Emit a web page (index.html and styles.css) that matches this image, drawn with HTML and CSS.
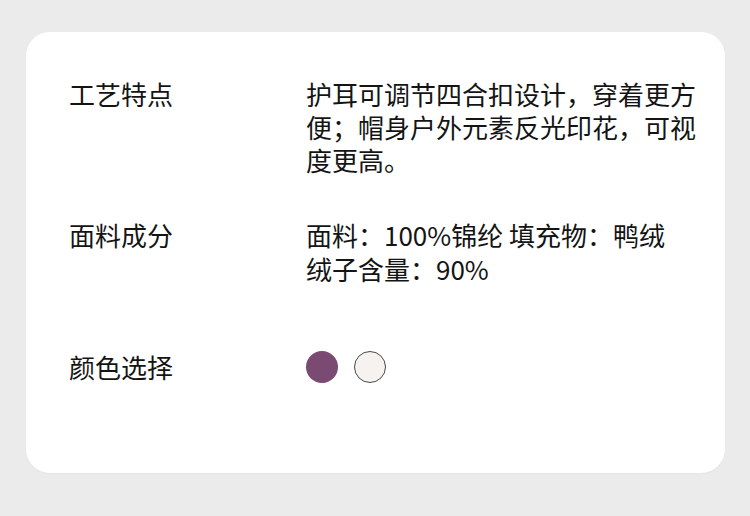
FILE: index.html
```html
<!DOCTYPE html>
<html lang="zh">
<head>
<meta charset="utf-8">
<link rel="stylesheet" href="styles.css">
</head>
<body>
<div class="card">
  <div class="row row-craft">
    <div class="label">工艺特点</div>
    <div class="value">护耳可调节四合扣设计，穿着更方便；帽身户外元素反光印花，可视度更高。</div>
  </div>
  <div class="row row-fabric">
    <div class="label">面料成分</div>
    <div class="value value-fabric">面料：100%锦纶 填充物：鸭绒 绒子含量：90%</div>
  </div>
  <div class="row row-color">
    <div class="label">颜色选择</div>
    <div class="swatches">
      <span class="swatch purple"></span>
      <span class="swatch white"></span>
    </div>
  </div>
</div>
</body>
</html>
```
FILE: styles.css
```css
html, body {
  margin: 0;
  padding: 0;
  background: #ebebeb;
}
body {
  width: 750px;
  height: 516px;
  padding: 32px 25px 0 26px;
  box-sizing: border-box;
  font-family: "Noto Sans CJK SC", "Noto Sans", sans-serif;
  font-weight: 400;
  color: #141414;
}
.card {
  background: #ffffff;
  border-radius: 24px;
  height: 441px;
  box-sizing: border-box;
  padding: 45px 30px 0 43px;
  box-shadow: 0 1px 2px rgba(0,0,0,0.03);
}
.row {
  display: grid;
  grid-template-columns: 237px 1fr;
  font-size: 26px;
  line-height: 33px;
}
.label {
  white-space: nowrap;
}
.value {
  width: 392px;
}
.value-fabric {
  width: 372px;
  line-height: 34px;
}
.row-fabric {
  margin-top: 42px;
}
.row-color {
  margin-top: 64px;
  align-items: center;
}
.swatches {
  display: flex;
  gap: 16px;
  align-items: center;
}
.swatch {
  width: 32px;
  height: 32px;
  border-radius: 50%;
  box-sizing: border-box;
}
.purple {
  background: #7a4a72;
}
.white {
  background: #f5f2ef;
  border: 1.5px solid #4a4a4a;
}
```
